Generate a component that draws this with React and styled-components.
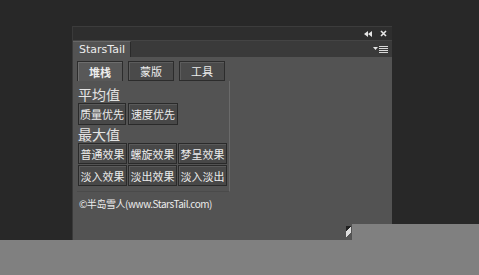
import React from "react";
import styled, { createGlobalStyle } from "styled-components";

const Global = createGlobalStyle`
  html, body { margin: 0; padding: 0; background: #282828; }
  body { font-family: "Noto Sans CJK SC", "Noto Sans", sans-serif; }
`;

const Screen = styled.div`
  position: relative;
  width: 479px;
  height: 275px;
  overflow: hidden;
  background: #282828;
  padding: 26px 0 0 72px;
  box-sizing: border-box;
`;

const Panel = styled.div`
  width: 320px;
  height: 260px;
  display: flex;
  flex-direction: column;
  background: #535353;
  border-left: 1px solid #3a3a3a;
  box-sizing: border-box;
`;

const TitleBar = styled.div`
  height: 14px;
  background: #2e2e2e;
  border-top: 1px solid #3c3c3c;
  box-sizing: border-box;
  display: flex;
  align-items: center;
  justify-content: flex-end;
  gap: 8px;
  padding-right: 5px;
  color: #e6e6e6;
`;

const TabStrip = styled.div`
  height: 17px;
  background: #3a3a3a;
  border-top: 1px solid #444;
  box-sizing: border-box;
  display: flex;
  align-items: flex-end;
  justify-content: space-between;
`;

const PanelTab = styled.div`
  width: 58px;
  height: 16px;
  background: #535353;
  border-top: 1px solid #666;
  border-right: 1px solid #2a2a2a;
  box-sizing: border-box;
  color: #ececec;
  font-family: "DejaVu Sans", "Noto Sans", sans-serif;
  font-size: 11px;
  line-height: 15px;
  padding-left: 6px;
`;

const MenuIcon = styled.div`
  align-self: center;
  margin-right: 4px;
  display: flex;
`;

const Content = styled.div`
  flex: 1;
  padding: 4px 0 0 4px;
  display: flex;
  flex-direction: column;
`;

const ModeRow = styled.div`
  display: flex;
  gap: 5px;
`;

const ModeTab = styled.div`
  width: 46px;
  height: 20px;
  box-sizing: border-box;
  border: 1px solid #2c2c2c;
  border-bottom: ${(p) => (p.$active ? "none" : "1px solid #2c2c2c")};
  background: ${(p) => (p.$active ? "#585858" : "#4a4a4a")};
  box-shadow: inset 1px 1px 0 ${(p) => (p.$active ? "#6e6e6e" : "#5c5c5c")};
  color: #ececec;
  font-size: 11px;
  font-weight: ${(p) => (p.$active ? 700 : 400)};
  display: flex;
  align-items: center;
  justify-content: center;
`;

const Group = styled.div`
  width: 153px;
  box-sizing: border-box;
  border-right: 1px solid #6a6a6a;
  border-bottom: 1px solid #4a4a4a;
  padding: 4px 0 5px 0;
  display: flex;
  flex-direction: column;
`;

const Label = styled.div`
  color: #e4e4e4;
  font-size: 14px;
  line-height: 18px;
  height: 18px;
  padding-left: 1px;
`;

const ButtonRow = styled.div`
  display: flex;
  gap: 2px;
  padding-left: 1px;
`;

const Grid = styled.div`
  display: grid;
  grid-template-columns: repeat(3, 49px);
  grid-auto-rows: 21px;
  gap: 1px 1px;
  padding-left: 1px;
`;

const Btn = styled.div`
  width: ${(p) => p.$w || 49}px;
  height: ${(p) => p.$h || 21}px;
  box-sizing: border-box;
  border: 1px solid #2a2a2a;
  background: #484848;
  box-shadow: inset 1px 1px 0 #5a5a5a;
  color: #ececec;
  font-size: 11px;
  display: flex;
  align-items: center;
  justify-content: center;
`;

const Copyright = styled.div`
  color: #ececec;
  font-size: 10px;
  letter-spacing: -0.45px;
  line-height: 14px;
  margin-top: 5px;
  padding-left: 2px;
  font-family: "Noto Sans CJK SC", "DejaVu Sans", sans-serif;
`;

const OverlayBottom = styled.div`
  position: absolute;
  left: 0;
  right: 0;
  top: 240px;
  bottom: 0;
  background: #808080;
`;

const OverlayRight = styled.div`
  position: absolute;
  left: 352px;
  right: 0;
  top: 224px;
  height: 16px;
  background: #808080;
`;

const Cursor = styled.div`
  position: absolute;
  left: 346px;
  top: 226px;
  width: 5px;
  height: 14px;
  background: linear-gradient(135deg, #222 0 30%, #ddd 30% 60%, #555 60%);
`;

function Collapse() {
  return (
    <svg width="8" height="6" viewBox="0 0 8 6">
      <path d="M4 0 L0 3 L4 6 Z M8 0 L4 3 L8 6 Z" fill="#e6e6e6" />
    </svg>
  );
}

function Close() {
  return (
    <svg width="7" height="7" viewBox="0 0 7 7">
      <path d="M1 1 L6 6 M6 1 L1 6" stroke="#e6e6e6" strokeWidth="1.6" />
    </svg>
  );
}

function Menu() {
  return (
    <svg width="15" height="7" viewBox="0 0 15 7">
      <path d="M0 1 L5 1 L2.5 4 Z" fill="#e6e6e6" />
      <path d="M6 0.5 H15 M6 2.5 H15 M6 4.5 H15 M6 6.5 H15" stroke="#d8d8d8" strokeWidth="1" />
    </svg>
  );
}

export default function App() {
  return (
    <>
      <Global />
      <Screen>
        <Panel>
          <TitleBar>
            <Collapse />
            <Close />
          </TitleBar>
          <TabStrip>
            <PanelTab>StarsTail</PanelTab>
            <MenuIcon>
              <Menu />
            </MenuIcon>
          </TabStrip>
          <Content>
            <ModeRow>
              <ModeTab $active>堆栈</ModeTab>
              <ModeTab>蒙版</ModeTab>
              <ModeTab>工具</ModeTab>
            </ModeRow>
            <Group>
              <Label>平均值</Label>
              <ButtonRow>
                <Btn $w={48} $h={22}>质量优先</Btn>
                <Btn $w={50} $h={22}>速度优先</Btn>
              </ButtonRow>
              <Label>最大值</Label>
              <Grid>
                <Btn>普通效果</Btn>
                <Btn>螺旋效果</Btn>
                <Btn>梦呈效果</Btn>
                <Btn>淡入效果</Btn>
                <Btn>淡出效果</Btn>
                <Btn>淡入淡出</Btn>
              </Grid>
            </Group>
            <Copyright>©半岛雪人(www.StarsTail.com)</Copyright>
          </Content>
        </Panel>
        <OverlayRight />
        <OverlayBottom />
        <Cursor />
      </Screen>
    </>
  );
}
